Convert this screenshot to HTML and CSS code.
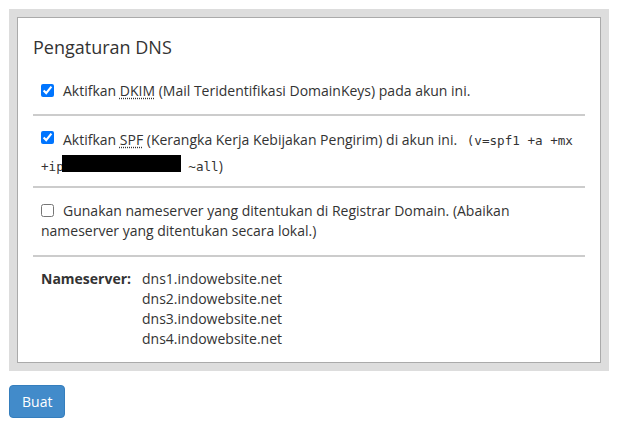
FILE: index.html
```html
<!DOCTYPE html>
<html lang="id">
<head>
  <meta charset="UTF-8" />
  <meta name="viewport" content="width=device-width, initial-scale=1.0"/>
  <title>Pengaturan DNS</title>
  <link rel="stylesheet" href="styles.css">
</head>
<body>
  <form class="dns-form">
    <div class="well">
      <div class="well-body">
        <h3 class="title">Pengaturan DNS</h3>

        <div class="option">
          <label>
            <input type="checkbox" checked />Aktifkan <abbr title="DomainKeys Identified Mail">DKIM</abbr> (Mail Teridentifikasi DomainKeys) pada akun ini.
          </label>
        </div>

        <div class="option spf">
          <label>
            <input type="checkbox" checked />Aktifkan <abbr title="Sender Policy Framework">SPF</abbr> (Kerangka Kerja Kebijakan Pengirim) di akun ini. <code class="record">(v=spf1 +a +mx +ip<span class="redacted"></span> ~all</code>)
          </label>
        </div>

        <div class="option">
          <label>
            <input type="checkbox" />Gunakan nameserver yang ditentukan di Registrar Domain. (Abaikan nameserver yang ditentukan secara lokal.)
          </label>
        </div>

        <div class="nameservers">
          <span class="ns-label">Nameserver:</span>
          <ul class="ns-list">
            <li>dns1.indowebsite.net</li>
            <li>dns2.indowebsite.net</li>
            <li>dns3.indowebsite.net</li>
            <li>dns4.indowebsite.net</li>
          </ul>
        </div>
      </div>
    </div>

    <button type="button" class="btn-primary">Buat</button>
  </form>
</body>
</html>
```

FILE: styles.css
```css
* {
  box-sizing: border-box;
}

body {
  margin: 0;
  padding: 9px;
  background: #ffffff;
  color: #333333;
  font-family: 'Open Sans', sans-serif;
  font-size: 14px;
  line-height: 20px;
}

.well {
  width: 600px;
  padding: 8px;
  background-color: #dddddd;
}

.well-body {
  background: #ffffff;
  border: 1px solid #aaaaaa;
  padding: 0 15px;
}

.title {
  margin: 19px 0 12px;
  font-size: 18px;
  font-weight: normal;
  line-height: 20px;
}

.option {
  padding: 12px 8px 13px;
  border-bottom: 2px solid #cccccc;
}

.option label {
  cursor: pointer;
}

.option input[type="checkbox"] {
  width: 13px;
  height: 13px;
  margin: 0 9px 0 0;
  vertical-align: -1px;
}

.option + .option {
  padding-top: 13px;
  padding-bottom: 14px;
}

.spf {
  line-height: 25px;
}

.option.spf {
  padding-top: 11px;
  padding-bottom: 7px;
}

.option.spf input[type="checkbox"] {
  vertical-align: 1px;
}

abbr[title] {
  text-decoration: underline dotted;
  text-underline-offset: 2px;
  cursor: help;
}

.record {
  margin-left: 6px;
  font-family: 'DejaVu Sans Mono', monospace;
  font-size: 12.6px;
  color: #333333;
}

.redacted {
  display: inline-block;
  width: 119px;
  height: 17px;
  margin-left: -2px;
  background: #000000;
  vertical-align: -1px;
}

.nameservers {
  display: flex;
  padding: 12px 8px 13px;
}

.ns-label {
  width: 101px;
  font-weight: bold;
}

.ns-list {
  margin: 0;
  padding: 0;
  list-style: none;
}

.btn-primary {
  margin-top: 14px;
  padding: 6px 12px 5px;
  font-family: inherit;
  font-size: 14px;
  line-height: 20px;
  color: #ffffff;
  background-color: #428bca;
  border: 1px solid #357ebd;
  border-radius: 4px;
  cursor: pointer;
}

.btn-primary:hover {
  background-color: #3071a9;
}
```
